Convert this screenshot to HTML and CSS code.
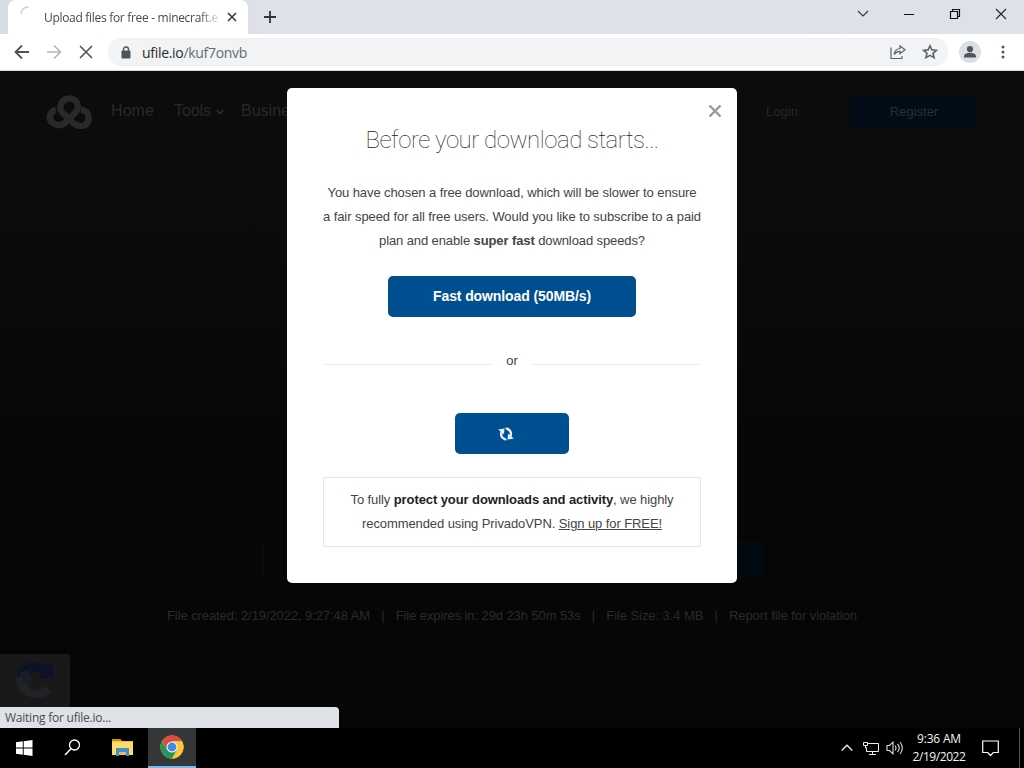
FILE: index.html
```html
<!DOCTYPE html>
<html lang="en">
<head>
<meta charset="utf-8">
<title>Upload files for free</title>
<link rel="stylesheet" href="styles.css">
</head>
<body>
<header class="tabstrip">
  <div class="tab">
    <svg class="spinner" width="14" height="14" viewBox="0 0 14 14"><path d="M1 8A7 7 0 0 1 8.500 1" fill="none" stroke="#cbd0d8" stroke-width="1.600"/></svg>
    <span class="tab-title"><span class="tab-text">Upload files for free - minecraft.e</span></span>
    <svg class="tab-close" width="10" height="10" viewBox="0 0 10 10"><path d="M1 1l8 8M9 1L1 9" stroke="#3c4043" stroke-width="1.700"/></svg>
  </div>
  <svg class="new-tab" width="12" height="12" viewBox="0 0 12 12"><path d="M6 0v12M0 6h12" stroke="#303338" stroke-width="1.800"/></svg>
  <div class="window-controls">
    <svg width="12" height="12" viewBox="0 0 12 12"><path d="M1 3l5 5 5-5" fill="none" stroke="#333" stroke-width="1.100"/></svg>
    <svg width="12" height="12" viewBox="0 0 12 12"><path d="M1 6.500h10" stroke="#111"/></svg>
    <svg width="12" height="12" viewBox="0 0 12 12"><path d="M1.500 3.500h7v7h-7zM3.500 3.500v-2h7v7h-2" fill="none" stroke="#111" stroke-width="1.200"/></svg>
    <svg width="12" height="12" viewBox="0 0 12 12"><path d="M1 1l10 10M11 1L1 11" stroke="#222" stroke-width="1.100"/></svg>
  </div>
</header>
<nav class="toolbar">
  <div class="nav-buttons">
    <svg width="16" height="16" viewBox="0 0 16 16"><path d="M15 8H2M8 1.500L1.500 8 8 14.500" fill="none" stroke="#50545a" stroke-width="1.800"/></svg>
    <svg width="16" height="16" viewBox="0 0 16 16"><path d="M1 8h13M8 1.500L14.500 8 8 14.500" fill="none" stroke="#b5b7ba" stroke-width="1.700"/></svg>
    <svg width="16" height="16" viewBox="0 0 16 16"><path d="M2 2l12 12M14 2L2 14" stroke="#50545a" stroke-width="1.600"/></svg>
  </div>
  <div class="omnibox">
    <svg class="lock" width="10" height="13" viewBox="0 0 10 13"><path d="M2.500 5V3.500a2.500 2.500 0 0 1 5 0V5" fill="none" stroke="#505459" stroke-width="1.400"/><rect x=".5" y="4.500" width="9" height="8" rx="1" fill="#505459"/></svg>
    <span class="url">ufile.io<span class="url-path">/kuf7onvb</span></span>
    <svg class="share" width="16" height="14" viewBox="0 0 16 14"><path d="M1 2.500v11h11V11M10 3.500V.8L15 4.800l-5 4V6.300C7.500 6.300 5.500 7.500 4.200 9.500 4.500 6 6.700 4 10 3.500z" fill="none" stroke="#5f6368" stroke-width="1.200"/></svg>
    <svg class="star" width="16" height="16" viewBox="0 0 16 16"><path d="M8 1.800l1.900 4.100 4.500.4L11 9.300l1.100 4.400L8 11.400l-4.100 2.300L5 9.300 1.600 6.300l4.500-.4z" fill="none" stroke="#5f6368" stroke-width="1.600"/></svg>
  </div>
  <svg class="avatar" width="22" height="22" viewBox="0 0 22 22"><circle cx="11" cy="11" r="11" fill="#dadee5"/><circle cx="11" cy="8" r="3.100" fill="#50555c"/><path d="M5 16.500v-1.300c0-2.100 3-3.400 6-3.400s6 1.300 6 3.400v1.300z" fill="#50555c"/></svg>
  <svg class="kebab" width="4" height="14" viewBox="0 0 4 14"><g fill="#53575c"><circle cx="2" cy="2" r="1.500"/><circle cx="2" cy="7" r="1.500"/><circle cx="2" cy="12" r="1.500"/></g></svg>
</nav>

<main class="page">
  <div class="site-nav">
    <svg class="site-logo" width="46" height="34" viewBox="0 0 46 34"><g fill="none" stroke="#292929" stroke-width="6.500"><path d="M10 14.500c-7 2-8 10-3 13.500 4 3 9 3 13-1l9-9c5-5 3-14-5-14.500-8-.5-12 8-8 13.500l12 11.500c5 4 12 3 14-2 2-6-1-11-7-12"/></g></svg>
    <span class="link home">Home</span>
    <span class="link tools">Tools</span>
    <svg class="caret" width="8" height="6" viewBox="0 0 8 6"><path d="M.7 1L4 4.300 7.300 1" fill="none" stroke="#303030" stroke-width="1.600"/></svg>
    <span class="link business">Business</span>
    <span class="login">Login</span>
    <span class="register">Register</span>
  </div>
  <div class="file-box"><span class="file-button"></span></div>
  <div class="file-info">
    <span class="created">File created: 2/19/2022, 9:27:48 AM</span><i>|</i>
    <span class="expires">File expires in: 29d 23h 50m 53s</span><i>|</i>
    <span class="size">File Size: 3.4 MB</span><i>|</i>
    <span class="report">Report file for violation</span>
  </div>
  <div class="captcha">
    <svg width="42" height="44" viewBox="0 0 42 44"><path d="M3 17C5 5 20-1 32 6l7-2v15H25l3-4c-7-4-12-2-14 3z" fill="#0d1226"/><path d="M2 19l11-5 1 11c1 8 12 8 17 2l7 6C27 44 2 40 2 19z" fill="#202325"/><path d="M5 14l9-3 5 8-6 7z" fill="#191d26"/></svg>
  </div>

  <section class="modal">
    <svg class="modal-close" width="14" height="14" viewBox="0 0 14 14"><path d="M1.500 1.500l11 11M12.500 1.500l-11 11" stroke="#999" stroke-width="2.400"/></svg>
    <h1><span>Before your download starts...</span></h1>
    <p class="intro"><span class="l1">You have chosen a free download, which will be slower to ensure</span><br><span class="l2">a fair speed for all free users. Would you like to subscribe to a paid</span><br><span class="l3">plan and enable <b>super fast</b> download speeds?</span></p>
    <div class="button fast"><span>Fast download (50MB/s)</span></div>
    <div class="divider"><hr><span>or</span><hr></div>
    <div class="button wait">
      <svg width="16" height="14" viewBox="0 0 16 14"><g fill="none" stroke="#e8f3fb" stroke-width="2.400"><path d="M7.500 12.300C3.800 11.800 2 8 3.700 4.500"/><path d="M8.500 1.700C12.200 2.200 14 6 12.300 9.500"/></g><path d="M.2 2.500L6.500 1.500 6 7.200zM15.800 11.500L9.500 12.500l.5-5.700z" fill="#e8f3fb"/><path d="M6.500.7h3v2.200zM9.500 13.300h-3v-2.200z" fill="#e8f3fb"/></svg>
    </div>
    <div class="promo"><span class="p1">To fully <b>protect your downloads and activity</b>, we highly</span><br><span class="p2">recommended using PrivadoVPN. <u>Sign up for FREE!</u></span></div>
  </section>
  <div class="status"><span>Waiting for ufile.io...</span></div>
</main>

<footer class="taskbar">
  <div class="task"><svg width="17" height="16" viewBox="0 0 17 16"><path d="M0 2.300l6.800-1v6.200H0zM7.700 1.200L16.500 0v7.500H7.700zM0 8.500h6.800v6.200L0 13.800zM7.700 8.500h8.800V16l-8.800-1.200z" fill="#fff"/></svg></div>
  <div class="task"><svg width="17" height="17" viewBox="0 0 17 17"><circle cx="10.500" cy="6" r="5" fill="none" stroke="#fff" stroke-width="1.300"/><path d="M7 9.700L1 16" stroke="#fff" stroke-width="1.500"/></svg></div>
  <div class="task folder"><svg width="22" height="19" viewBox="0 0 22 19"><path d="M0 1h8l2 2h11v14H0z" fill="#f2bd3e"/><path d="M0 1h8l1.500 2H0z" fill="#cf8d20"/><path d="M0 4h21v13H0z" fill="#ffda69"/><path d="M4 10h13v8h-3v-4H7v4H4z" fill="#3f8fca"/><path d="M7 14h7v3H7z" fill="#e6bf58"/></svg></div>
  <div class="task active"><svg width="24" height="24" viewBox="0 0 24 24"><circle cx="12" cy="12" r="11.500" fill="#fbc83b"/><path d="M2.040 6.250A11.500 11.500 0 0 1 21.960 6.250H12L7 14.900z" fill="#dc4c42"/><path d="M2.040 6.250A11.500 11.500 0 0 0 12 23.500L17 14.900H7z" fill="#25965a"/><path d="M12 6.250h9.960A11.500 11.500 0 0 1 12 23.500l5-8.600z" fill="#fbc83b"/><circle cx="12" cy="12" r="5.500" fill="#eef2f5"/><circle cx="12" cy="12" r="4.400" fill="#418be2"/></svg></div>
  <div class="tray">
    <svg class="chev" width="12" height="8" viewBox="0 0 12 8"><path d="M.7 6.500L6 1.200l5.300 5.300" fill="none" stroke="#eee" stroke-width="1.300"/></svg>
    <svg class="net" width="17" height="15" viewBox="0 0 17 15"><path d="M5 2.500h10.500v8H3.500V7M9.500 10.500v3M6 13.500h7M.5 1.500h4v3h-4zM2.500 4.500V7h1.500" fill="none" stroke="#eee"/></svg>
    <svg class="vol" width="18" height="14" viewBox="0 0 18 14"><path d="M1 4.500h2.500L7 1.200v11.600L3.500 9.500H1zM9 4.500q2 2.500 0 5M11.500 2.800q3.500 4.200 0 8.400M14 1q4.700 6 0 12" fill="none" stroke="#ddd" stroke-width="1.100"/></svg>
    <div class="clock"><span class="time">9:36 AM</span><span class="date">2/19/2022</span></div>
    <svg class="notice" width="17" height="17" viewBox="0 0 17 17"><path d="M.7 1h15.600v11.500h-5L8.500 15.500l-2.800-3h-5z" fill="none" stroke="#fff" stroke-width="1.200"/></svg>
    <span class="peek"></span>
  </div>
</footer>
<script src="fit.js"></script>
</body>
</html>
```

FILE: styles.css
```css
* { box-sizing: border-box; }
body { margin: 0; width: 1024px; height: 768px; overflow: hidden; display: flex; flex-direction: column; background: #000; font-family: "Liberation Sans", Arial, sans-serif; }
svg { display: block; flex: none; }
span { white-space: nowrap; }
.tabstrip { height: 34px; flex: none; display: flex; align-items: center; background: linear-gradient(90deg, #d8dde3, #dfe2e9 30%, #dee1e8); font-family: "Open Sans", "Noto Sans", sans-serif; }
.tab { width: 240px; height: 34px; margin-left: 8px; padding-left: 12px; display: flex; align-items: center; background: #fff; border-radius: 8px 8px 0 0; }
.spinner { margin-top: -8px; }
.tab-title { width: 175px; margin-left: 10px; font-size: 12px; color: #45494e; mask-image: linear-gradient(90deg, #000 155px, transparent 178px); }
.tab-close { margin-left: 8px; }
.new-tab { margin-left: 16px; }
.window-controls { display: flex; gap: 34px; margin: -6px 17px 0 auto; }
.toolbar { height: 37px; flex: none; display: flex; align-items: center; background: #fff; border-bottom: 1px solid #d8d9da; }
.nav-buttons { display: flex; gap: 16px; margin-left: 14px; }
.omnibox { width: 840px; height: 28px; margin-left: 14px; padding: 0 10px 0 13px; display: flex; align-items: center; border-radius: 14px; background: #f1f3f4; }
.url { margin-left: 11px; font: 14px "Open Sans", "Noto Sans", sans-serif; color: #282c30; }
.url-path { color: #666b70; }
.share { margin-left: auto; }
.star { margin-left: 16px; }
.avatar { margin-left: 11px; }
.kebab { margin-left: 20px; }
.page { position: relative; height: 657px; flex: none; display: flex; flex-direction: column; background: linear-gradient(#0c0c0c 0, #0b0b0b 170px, #060606 390px, #060606); }
.site-nav { height: 81px; flex: none; display: flex; align-items: center; padding-left: 46px; color: #292929; }
.link { font-size: 16px; margin-top: -2px; }
.home { margin-left: 19px; }
.tools { margin-left: 20px; }
.caret { margin-left: 5px; }
.business { margin-left: 17px; width: 72px; }
.login { margin-left: 453px; font-size: 13px; color: #242729; }
.register { width: 128px; height: 34px; margin-left: 52px; border-radius: 4px; background: #020c16; text-align: center; font: 13px/34px "Liberation Sans", sans-serif; color: #26303a; }
.file-box { width: 501px; height: 36px; margin: 389px 0 0 262px; border-left: 1px solid #101010; display: flex; justify-content: flex-end; flex: none; }
.file-button { width: 50px; height: 36px; background: #010911; border-radius: 3px; }
.file-info { height: 20px; margin: 28px 167px 0; display: flex; align-items: center; justify-content: space-between; color: #2a2a2a; font-size: 13px; }
.file-info i { font-style: normal; }
.captcha { width: 70px; height: 54px; margin-top: 29px; padding: 5px 0 0 14px; background: #191919; border-radius: 0 3px 0 0; }
.modal { position: absolute; left: 287px; top: 17px; width: 450px; height: 495px; padding: 0 36px; background: #fff; border-radius: 5px; color: #444; text-align: center; }
.modal-close { position: absolute; left: 421px; top: 16px; }
h1 { margin: 35px 0 0; height: 34px; font: 100 24px/34px Roboto, sans-serif; color: #222; }
.intro { margin: 24px -4px 0; font-size: 13px; line-height: 24px; }
.button { height: 41px; margin: 0 auto; border-radius: 5px; background: #004f91; color: #fff; font: bold 14px/41px "Liberation Sans", sans-serif; }
.fast { width: 248px; margin-top: 23px; }
.divider { display: flex; gap: 15px; align-items: center; height: 20px; margin: 33px 2px 0; font-size: 13px; }
hr { flex: 1; margin: 8px 0 0; border: 0; border-top: 1px solid #e6e6e6; }
.wait { width: 114px; margin-top: 43px; display: flex; align-items: center; padding-left: 43px; }
.promo { height: 70px; margin-top: 23px; padding-top: 10px; border: 1px solid #e5e5e5; font-size: 13px; line-height: 24px; }
.promo b { color: #222; }
.status { position: absolute; left: 0; bottom: 0; width: 339px; height: 21px; padding-left: 5px; border-top-right-radius: 4px; background: #dfe2e7; color: #484c50; font: 12px/21px "Open Sans", sans-serif; }
.taskbar { height: 40px; flex: none; display: flex; background: #000; }
.task { width: 48px; height: 40px; padding-bottom: 1px; display: flex; align-items: center; justify-content: center; }
.folder { width: 52px; padding-left: 2px; }
.active { background: #343638; border-bottom: 2px solid #76b9ed; padding: 0; }
.tray { display: flex; align-items: center; margin-left: auto; width: 183px; }
.net { margin-left: 10px; }
.vol { margin-left: 6px; }
.clock { width: 56px; margin-left: 7px; display: flex; flex-direction: column; align-items: center; color: #f4f4f4; font: 12px/18px "Open Sans", sans-serif; margin-top: -1px; }
.notice { margin-left: 15px; }
.peek { width: 1px; height: 40px; margin-left: 20px; background: #555; }
```

FILE: fit.js
```js
// Tracking keeps each line at its designed measure with the available typefaces.
const widths = {
  ".tab-text": 174, ".url": 105, ".home": 43, ".tools": 37, ".login": 32,
  ".created": 203, ".expires": 185, ".size": 97, ".report": 128,
  "h1 span": 293, ".l1": 369, ".l2": 378, ".l3": 266, ".fast span": 158,
  ".p1": 323, ".p2": 300, ".status span": 106, ".time": 44, ".date": 53
};
for (const [selector, width] of Object.entries(widths)) {
  const line = document.querySelector(selector);
  const natural = line.getBoundingClientRect().width;
  line.style.letterSpacing = (width - natural) / line.textContent.length + "px";
}
```
